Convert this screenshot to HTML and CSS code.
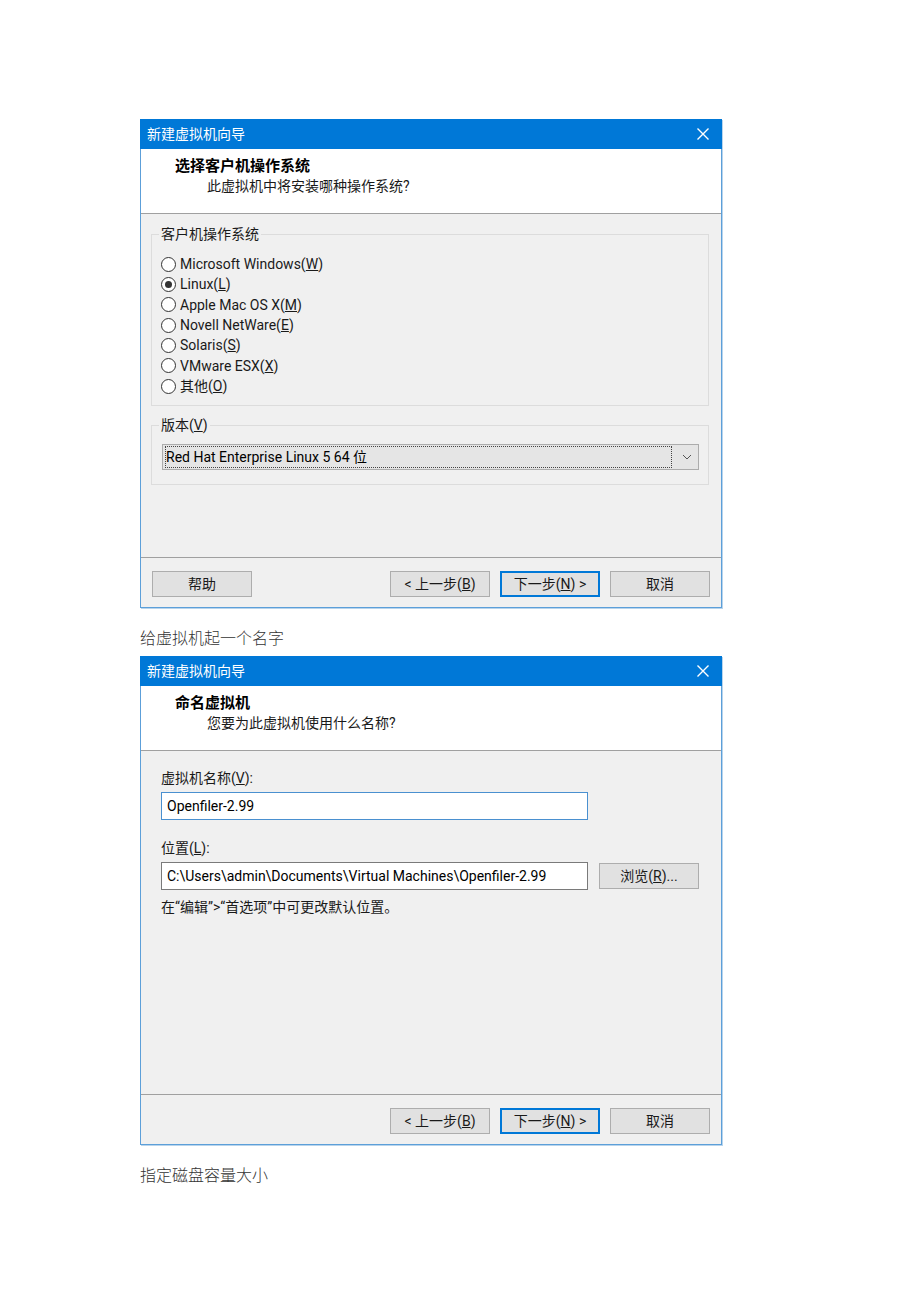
FILE: index.html
```html
<!DOCTYPE html>
<html lang="zh-CN">
<head>
<meta charset="utf-8">
<title>新建虚拟机向导</title>
<link rel="stylesheet" href="styles.css">
</head>
<body>
<div class="page">

  <div class="dialog">
    <div class="titlebar">
      <span class="title-text">新建虚拟机向导</span>
      <svg class="close" width="14" height="14" viewBox="0 0 14 14"><path d="M1.5 1.5 L12.5 12.5 M12.5 1.5 L1.5 12.5" stroke="#fff" stroke-width="1.4" fill="none"/></svg>
    </div>
    <div class="header">
      <div class="h-title">选择客户机操作系统</div>
      <div class="h-sub">此虚拟机中将安装哪种操作系统?</div>
    </div>
    <div class="body body-os">
      <fieldset class="group group-os">
        <legend>客户机操作系统</legend>
        <div class="radio"><span class="circle"></span><span>Microsoft Windows(<u>W</u>)</span></div>
        <div class="radio"><span class="circle checked"></span><span>Linux(<u>L</u>)</span></div>
        <div class="radio"><span class="circle"></span><span>Apple Mac OS X(<u>M</u>)</span></div>
        <div class="radio"><span class="circle"></span><span>Novell NetWare(<u>E</u>)</span></div>
        <div class="radio"><span class="circle"></span><span>Solaris(<u>S</u>)</span></div>
        <div class="radio"><span class="circle"></span><span>VMware ESX(<u>X</u>)</span></div>
        <div class="radio"><span class="circle"></span><span>其他(<u>O</u>)</span></div>
      </fieldset>
      <fieldset class="group group-ver">
        <legend>版本(<u>V</u>)</legend>
        <div class="combo">
          <div class="combo-focus">Red Hat Enterprise Linux 5 64 位</div>
          <svg class="chev" width="10" height="6" viewBox="0 0 10 6"><path d="M1 1 L5 5 L9 1" stroke="#555" stroke-width="1" fill="none"/></svg>
        </div>
      </fieldset>
    </div>
    <div class="footer">
      <button class="btn">帮助</button>
      <span class="spacer"></span>
      <button class="btn">&lt; 上一步(<u>B</u>)</button>
      <button class="btn default">下一步(<u>N</u>) &gt;</button>
      <button class="btn">取消</button>
    </div>
  </div>

  <p class="caption">给虚拟机起一个名字</p>

  <div class="dialog">
    <div class="titlebar">
      <span class="title-text">新建虚拟机向导</span>
      <svg class="close" width="14" height="14" viewBox="0 0 14 14"><path d="M1.5 1.5 L12.5 12.5 M12.5 1.5 L1.5 12.5" stroke="#fff" stroke-width="1.4" fill="none"/></svg>
    </div>
    <div class="header">
      <div class="h-title">命名虚拟机</div>
      <div class="h-sub">您要为此虚拟机使用什么名称?</div>
    </div>
    <div class="body body-name">
      <div class="label">虚拟机名称(<u>V</u>):</div>
      <div class="input focused">Openfiler-2.99</div>
      <div class="label label-loc">位置(<u>L</u>):</div>
      <div class="row">
        <div class="input">C:\Users\admin\Documents\Virtual Machines\Openfiler-2.99</div>
        <button class="btn browse">浏览(<u>R</u>)...</button>
      </div>
      <div class="hint">在“编辑”&gt;“首选项”中可更改默认位置。</div>
    </div>
    <div class="footer">
      <span class="spacer"></span>
      <button class="btn">&lt; 上一步(<u>B</u>)</button>
      <button class="btn default">下一步(<u>N</u>) &gt;</button>
      <button class="btn">取消</button>
    </div>
  </div>

  <p class="caption">指定磁盘容量大小</p>

</div>
</body>
</html>
```

FILE: styles.css
```css
html, body {
  margin: 0;
  padding: 0;
  background: #ffffff;
}

.page {
  padding: 119px 0 0 140px;
  width: 582px;
}

.dialog {
  width: 582px;
  box-sizing: border-box;
  border: 1px solid #5c9fd9;
  border-top: none;
  background: #f0f0f0;
  font-family: Roboto, "Noto Sans CJK SC", sans-serif;
  font-size: 14px;
  color: #1a1a1a;
  box-shadow: 1px 1px 0 #b8d4ec;
}

.titlebar {
  height: 30px;
  background: #0078d7;
  margin: 0 -1px;
  display: flex;
  align-items: center;
  justify-content: space-between;
  padding: 0 12px 0 7px;
}

.title-text {
  color: #ffffff;
  font-size: 14px;
  line-height: 30px;
}

.close {
  display: block;
}

.header {
  box-sizing: border-box;
  background: #ffffff;
  border-bottom: 1px solid #a0a0a0;
  padding: 7px 0 0 34px;
  height: 65px;
}

.h-title {
  font-weight: bold;
  font-size: 15px;
  line-height: 20px;
  color: #000;
}

.h-sub {
  line-height: 21px;
  padding-left: 32px;
  color: #1a1a1a;
}

.body {
  box-sizing: border-box;
  border-bottom: 1px solid #a0a0a0;
  height: 344px;
}

.body-os {
  padding: 10px 12px 0 10px;
}

.group {
  margin: 0;
  border: 1px solid #dcdcdc;
  padding: 0 0 0 9px;
  min-width: 0;
}

.group legend {
  padding: 0 2px;
  margin-left: -2px;
  line-height: 20px;
  color: #1a1a1a;
}

.group-os {
  padding-top: 10px;
  padding-bottom: 9px;
}

.radio {
  display: flex;
  align-items: center;
  height: 20.33px;
  line-height: 20px;
}

.circle {
  width: 13px;
  height: 13px;
  border: 1px solid #333;
  border-radius: 50%;
  margin-right: 4px;
  display: flex;
  align-items: center;
  justify-content: center;
  background: #fff;
  flex: none;
}

.circle.checked::after {
  content: "";
  width: 7px;
  height: 7px;
  border-radius: 50%;
  background: #333;
}

.group-ver {
  margin-top: 9px;
  padding-top: 9px;
  padding-bottom: 14px;
}

.combo {
  margin: 0 9px 0 1px;
  height: 26px;
  box-sizing: border-box;
  border: 1px solid #acacac;
  background: #e5e5e5;
  display: flex;
  align-items: center;
  padding: 0 6px 0 2px;
}

.combo-focus {
  flex: 1;
  height: 20px;
  line-height: 20px;
  border: 1px dotted #444;
  padding-left: 0;
  margin-right: 10px;
  color: #000;
}

.chev {
  display: block;
}

.footer {
  height: 49px;
  box-sizing: border-box;
  display: flex;
  align-items: flex-start;
  gap: 10px;
  padding: 13px 11px 0 11px;
}

.spacer {
  flex: 1;
}

.btn {
  width: 100px;
  height: 26px;
  box-sizing: border-box;
  border: 1px solid #adadad;
  background: #e1e1e1;
  font-family: Roboto, "Noto Sans CJK SC", sans-serif;
  font-size: 14px;
  color: #1a1a1a;
  padding: 0;
  margin: 0;
  line-height: 22px;
}

.btn.default {
  border: 2px solid #0078d7;
}

.body-name {
  padding: 17px 0 0 20px;
}

.label {
  line-height: 20px;
}

.input {
  width: 427px;
  height: 28px;
  box-sizing: border-box;
  border: 1px solid #7a7a7a;
  background: #fff;
  line-height: 26px;
  padding-left: 5px;
  margin-top: 4px;
  color: #000;
  white-space: nowrap;
  overflow: hidden;
}

.input.focused {
  border-color: #4a90d0;
}

.label-loc {
  margin-top: 18px;
}

.row {
  display: flex;
  align-items: center;
  gap: 11px;
}

.browse {
  margin-top: 4px;
}

.hint {
  margin-top: 7px;
  line-height: 20px;
}

.caption {
  margin: 0;
  padding: 17px 0 7px 0;
  line-height: 24px;
  font-family: "Noto Sans CJK SC", sans-serif;
  font-weight: 300;
  font-size: 16px;
  color: #333;
}
```
